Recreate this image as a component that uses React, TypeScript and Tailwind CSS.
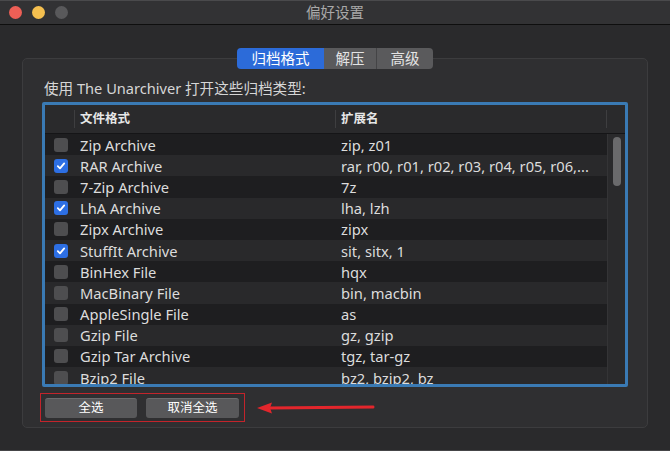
import React from 'react';

type Row = { name: string; ext: string; on: boolean };

const rows: Row[] = [
  { name: 'Zip Archive', ext: 'zip, z01', on: false },
  { name: 'RAR Archive', ext: 'rar, r00, r01, r02, r03, r04, r05, r06,...', on: true },
  { name: '7-Zip Archive', ext: '7z', on: false },
  { name: 'LhA Archive', ext: 'lha, lzh', on: true },
  { name: 'Zipx Archive', ext: 'zipx', on: false },
  { name: 'StuffIt Archive', ext: 'sit, sitx, 1', on: true },
  { name: 'BinHex File', ext: 'hqx', on: false },
  { name: 'MacBinary File', ext: 'bin, macbin', on: false },
  { name: 'AppleSingle File', ext: 'as', on: false },
  { name: 'Gzip File', ext: 'gz, gzip', on: false },
  { name: 'Gzip Tar Archive', ext: 'tgz, tar-gz', on: false },
  { name: 'Bzip2 File', ext: 'bz2, bzip2, bz', on: false },
];

const font = { fontFamily: '"Noto Sans", "Noto Sans CJK SC", sans-serif' };

const Check: React.FC<{ on: boolean }> = ({ on }) =>
  on ? (
    <div className="w-[14px] h-[14px] rounded-[3px] bg-[#2d6fe4] flex items-center justify-center">
      <svg width="10" height="10" viewBox="0 0 10 10">
        <path d="M1.8 5.2 L4 7.4 L8.2 2.4" fill="none" stroke="white" strokeWidth="1.8" strokeLinecap="round" strokeLinejoin="round" />
      </svg>
    </div>
  ) : (
    <div className="w-[14px] h-[14px] rounded-[3px] bg-[#4e4e50]" />
  );

export default function App() {
  return (
    <div className="w-[670px] h-[451px] bg-[#2a2a2c] flex flex-col overflow-hidden text-[#dedede]" style={font}>
      {/* title bar */}
      <div className="h-[25px] shrink-0 bg-[#323234] border-b border-[#0e0e0e] border-t border-t-[#4a4a4c] flex items-center relative">
        <div className="flex items-center gap-[10px] pl-[9px]">
          <div className="w-[13px] h-[13px] rounded-full bg-[#ed5f56]" />
          <div className="w-[13px] h-[13px] rounded-full bg-[#f4bf4f]" />
          <div className="w-[13px] h-[13px] rounded-full bg-[#59595b]" />
        </div>
        <div className="absolute inset-0 flex items-center justify-center text-[14.5px] text-[#a9a9a9]">偏好设置</div>
      </div>

      <div className="flex-1 flex flex-col px-[22px] pt-[23px] pb-[22px] border-b border-[#454547]">
        {/* tabs */}
        <div className="relative z-10 flex justify-center">
          <div className="flex h-[21px] rounded-[4px] overflow-hidden text-[14.5px]">
            <div className="w-[87px] bg-[#2c6bd9] text-white flex items-center justify-center">归档格式</div>
            <div className="w-[53px] bg-[#5a5a5c] text-[#e4e4e4] flex items-center justify-center border-r border-[#444446]">解压</div>
            <div className="w-[56px] bg-[#5a5a5c] text-[#e4e4e4] flex items-center justify-center">高级</div>
          </div>
        </div>

        {/* group box */}
        <div className="-mt-[11px] flex-1 rounded-[5px] bg-[#2f2f31] border border-[#3c3c3e] px-[19px] pt-[18px]">
          <div className="text-[14.6px] text-[#d6d6d6] h-[24px] flex items-center pl-[2px]">使用 The Unarchiver 打开这些归档类型:</div>

          {/* table */}
          <div className="mt-[1px] w-[586px] h-[285px] border-[3px] border-[#3a7ab4] rounded-[2px] overflow-hidden flex flex-col bg-[#1e1e20]">
            <div className="h-[29px] shrink-0 flex bg-[#2a2a2c] border-b border-[#151517] text-[12.5px] font-bold text-[#e6e6e6]">
              <div className="w-[30px] border-r border-[#3e3e40] my-[5px]" />
              <div className="w-[261px] pl-[5px] flex items-center border-r border-[#3e3e40] my-[5px]">文件格式</div>
              <div className="w-[271px] pl-[5px] flex items-center border-r border-[#3e3e40] my-[5px]">扩展名</div>
              <div className="flex-1" />
            </div>
            <div className="flex-1 flex overflow-hidden">
              <div className="w-[562px] flex flex-col">
                {rows.map((r, i) => (
                  <div key={r.name} className={`h-[21.2px] shrink-0 flex items-center text-[14.7px] text-[#dcdcdc] ${i % 2 === 0 ? 'bg-[#1e1e20]' : 'bg-[#29292b]'}`}>
                    <div className="w-[30px] flex justify-center pl-[2px]">
                      <Check on={r.on} />
                    </div>
                    <div className="w-[261px] pl-[5px] whitespace-nowrap">{r.name}</div>
                    <div className="pl-[5px] whitespace-nowrap">{r.ext}</div>
                  </div>
                ))}
              </div>
              <div className="flex-1 bg-[#2a2a2c] border-l border-[#343436] flex justify-center pt-[3px]">
                <div className="w-[8px] h-[49px] rounded-full bg-[#6a6a6c]" />
              </div>
            </div>
          </div>

          {/* buttons */}
          <div className="mt-[6px] flex items-center">
            <div className="-ml-[2px] w-[205px] h-[29px] border border-[#c3242b] flex items-center gap-[9px] px-[4px]">
              <div className="w-[92px] h-[20px] rounded-[3px] bg-[#58585a] border-t border-[#6c6c6e] text-[12.5px] text-white flex items-center justify-center">全选</div>
              <div className="w-[93px] h-[20px] rounded-[3px] bg-[#58585a] border-t border-[#6c6c6e] text-[12.5px] text-white flex items-center justify-center">取消全选</div>
            </div>
            <svg width="120" height="14" viewBox="0 0 120 14" className="ml-[12px]">
              <path d="M12 7 L116 6" stroke="#e3262c" strokeWidth="3" strokeLinecap="round" />
              <path d="M0 7 L15 1.5 L13 7 L15 12.5 Z" fill="#e3262c" />
            </svg>
          </div>
        </div>
      </div>
    </div>
  );
}
